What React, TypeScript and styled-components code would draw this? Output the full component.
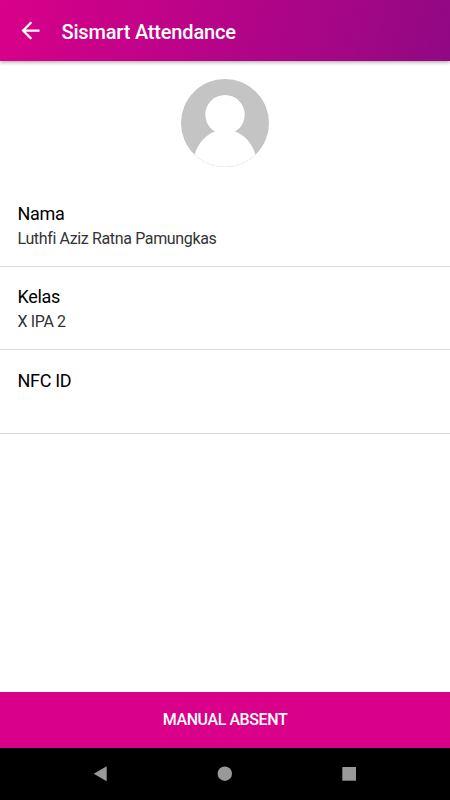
import React from 'react';
import styled, { createGlobalStyle } from 'styled-components';

const GlobalStyle = createGlobalStyle`
  * { box-sizing: border-box; }
  body { margin: 0; background: #fff; }
  button { font: inherit; border: 0; padding: 0; background: none; }
`;

const Screen = styled.div`
  display: flex;
  flex-direction: column;
  height: 100vh;
  overflow: hidden;
  background: #fff;
  font-family: Roboto, "Liberation Sans", sans-serif;
  color: #000;
`;

const Header = styled.header`
  display: flex;
  align-items: center;
  flex: 0 0 61px;
  padding-left: 17px;
  background: linear-gradient(105deg, #d9008a 0%, #b50488 50%, #910884 100%);
  box-shadow: 0 1px 4px rgba(0, 0, 0, 0.4);
`;

const BackButton = styled.button`
  display: flex;
  width: 27px;
  height: 27px;
  margin-right: 17.5px;
`;

const Title = styled.h1`
  margin: 3px 0 0;
  font-size: 20px;
  font-weight: 500;
  line-height: 26px;
  letter-spacing: -0.18px;
  color: #fff;
`;

const Content = styled.main`
  flex: 1;
  min-height: 0;
`;

const AvatarArea = styled.div`
  display: flex;
  justify-content: center;
  height: 122px;
  padding-top: 17.5px;
`;

const Field = styled.section`
  height: 83.5px;
  padding: 18.8px 17.5px 0;
  border-bottom: 1px solid #d6d6d6;
`;

const Label = styled.div`
  font-size: 18px;
  line-height: 24px;
  letter-spacing: -0.32px;
`;

const Value = styled.div`
  margin-top: 2px;
  font-size: 16px;
  line-height: 22px;
  letter-spacing: -0.36px;
  color: #333;
`;

const PrimaryButton = styled.button`
  flex: 0 0 56px;
  && {
    background: #d9008a;
    color: #fff;
    font-size: 16px;
    font-weight: 500;
    letter-spacing: -0.42px;
  }
`;

const NavBar = styled.nav`
  display: flex;
  justify-content: space-between;
  align-items: center;
  flex: 0 0 52.5px;
  padding: 0 92px;
  background: #000;
`;

const NavButton = styled.button`
  display: flex;
  width: 16px;
  height: 16px;
`;

const fields = [
  { label: 'Nama', value: 'Luthfi Aziz Ratna Pamungkas' },
  { label: 'Kelas', value: 'X IPA 2' },
  { label: 'NFC ID', value: '' },
];

export default function App() {
  return (
    <Screen>
      <GlobalStyle />
      <Header>
        <BackButton aria-label="Back">
          <svg width="27" height="27" viewBox="0 0 24 24" fill="#fff">
            <path d="M20 11H7.83l5.59-5.59L12 4l-8 8 8 8 1.41-1.41L7.83 13H20v-2z" />
          </svg>
        </BackButton>
        <Title>Sismart Attendance</Title>
      </Header>
      <Content>
        <AvatarArea>
          <svg width="88" height="88" viewBox="0 0 88 88">
            <defs>
              <clipPath id="avatar-clip">
                <circle cx="44" cy="44" r="44" />
              </clipPath>
            </defs>
            <g clipPath="url(#avatar-clip)">
              <rect width="88" height="88" fill="#c4c4c4" />
              <circle cx="44" cy="35.6" r="19.7" fill="#fff" />
              <path d="M13.5 75.5C18 62 26 55.5 34 52.5H54C62 55.5 70 62 74.5 75.5V88H13.5Z" fill="#fff" />
            </g>
            <path
              d="M13.5 75.5A44 44 0 0 0 74.5 75.5"
              fill="none"
              stroke="#e4e4e4"
              strokeWidth="0.8"
              strokeDasharray="3 2"
            />
          </svg>
        </AvatarArea>
        {fields.map((f) => (
          <Field key={f.label}>
            <Label>{f.label}</Label>
            <Value>{f.value}</Value>
          </Field>
        ))}
      </Content>
      <PrimaryButton>MANUAL ABSENT</PrimaryButton>
      <NavBar>
        <NavButton aria-label="Back">
          <svg width="16" height="16" viewBox="0 0 16 16">
            <path d="M1.7 7.8L14.7 0.3V15.3Z" fill="#999" />
          </svg>
        </NavButton>
        <NavButton aria-label="Home">
          <svg width="16" height="16" viewBox="0 0 16 16">
            <circle cx="7.8" cy="7.7" r="7.2" fill="#999" />
          </svg>
        </NavButton>
        <NavButton aria-label="Recent apps">
          <svg width="16" height="16" viewBox="0 0 16 16">
            <rect x="0.3" y="1" width="13.7" height="13.7" fill="#999" />
          </svg>
        </NavButton>
      </NavBar>
    </Screen>
  );
}
